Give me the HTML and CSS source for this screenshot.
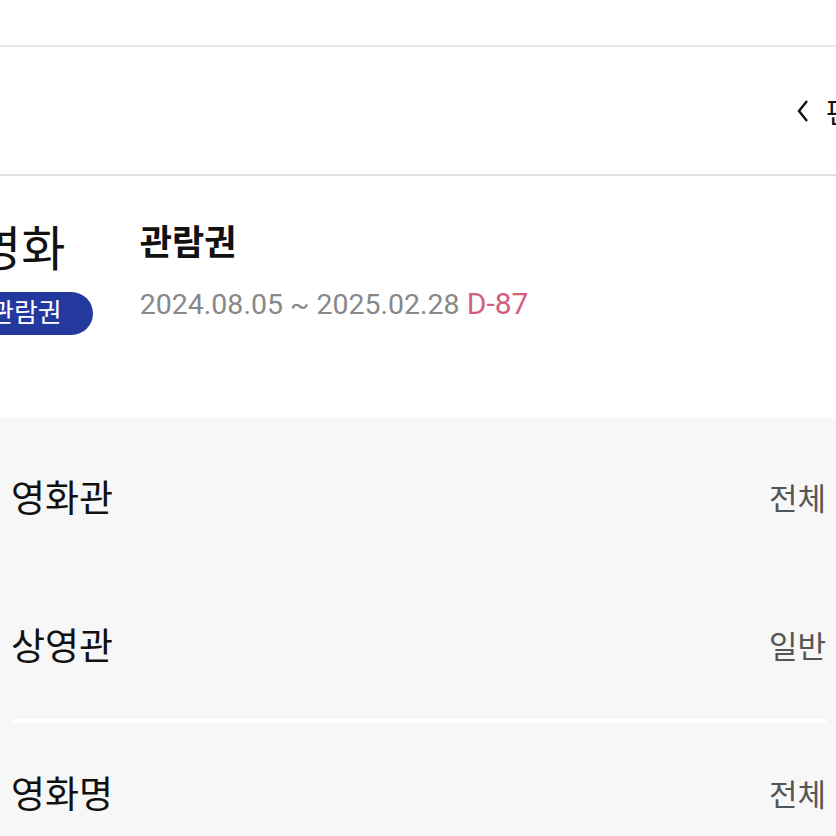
FILE: index.html
```html
<!DOCTYPE html>
<html lang="ko">
<head>
    <meta charset="UTF-8">
    <meta name="viewport" content="width=device-width, initial-scale=1.0">
    <title>관람권</title>
    <link rel="stylesheet" href="styles.css">
</head>
<body>

    <div class="status-bar"></div>

    <header class="header">
        <svg class="chevron" width="14" height="24" viewBox="0 0 14 24">
            <polyline points="11,2 3,12 11,22" fill="none" stroke="#111" stroke-width="2.4"/>
        </svg>
        <span class="header-title">편집</span>
    </header>

    <section class="ticket">
        <div class="brand">
            <div class="brand-name">영화</div>
            <span class="badge">관람권</span>
        </div>
        <div class="info">
            <h1 class="title">관람권</h1>
            <p class="period">2024.08.05 ~ 2025.02.28 <span class="dday">D-87</span></p>
        </div>
    </section>

    <section class="filters">
        <div class="row">
            <span class="label">영화관</span>
            <span class="value">전체</span>
        </div>
        <div class="row row-faint">
            <span class="label">상영관</span>
            <span class="value">일반</span>
        </div>
        <div class="row row-split">
            <span class="label">영화명</span>
            <span class="value">전체</span>
        </div>
    </section>

</body>
</html>
```

FILE: styles.css
```css
body {
    font-family: Roboto, "Noto Sans CJK KR", sans-serif;
    background-color: #fff;
    margin: 0;
    padding: 0;
    width: 836px;
    height: 836px;
    overflow: hidden;
}

.status-bar {
    height: 45px;
    background-color: #fff;
}

.header {
    height: 127px;
    border-top: 2px solid #e6e6e6;
    border-bottom: 2px solid #e0e0e0;
    display: flex;
    align-items: center;
    padding-left: 796px;
    white-space: nowrap;
    overflow: hidden;
}

.chevron {
    flex: 0 0 auto;
}

.header-title {
    margin-left: 16px;
    font-size: 28px;
    color: #111;
}

.ticket {
    height: 242px;
    box-sizing: border-box;
    padding-top: 48px;
    display: flex;
    align-items: flex-start;
    gap: 47px;
}

.brand {
    margin-left: -23px;
    display: flex;
    flex-direction: column;
    align-items: flex-start;
}

.brand-name {
    font-size: 48px;
    line-height: 52px;
    color: #111;
}

.badge {
    margin-top: 16px;
    height: 43px;
    line-height: 43px;
    padding: 0 31px 0 13px;
    border-radius: 22px;
    background-color: #24399e;
    color: #fff;
    font-size: 26px;
}

.title {
    margin: 0;
    font-size: 35px;
    line-height: 40px;
    font-weight: bold;
    color: #111;
}

.period {
    margin: 20px 0 0;
    font-size: 28.5px;
    line-height: 40px;
    color: #888;
}

.dday {
    color: #d2607c;
    font-size: 30px;
}

.filters {
    background-color: #f7f7f7;
    padding: 0 15px;
}

.row {
    height: 150px;
    display: flex;
    justify-content: space-between;
    align-items: center;
    margin-right: -5px;
    margin-left: -4px;
}

.row:first-child {
    padding-top: 6px;
    height: 144px;
}

.row-faint {
    border-top: 1px solid #fbfbfb;
}

.row-split {
    border-top: 4px solid #fff;
    height: 138px;
}

.label {
    font-size: 37px;
    color: #111;
}

.value {
    font-size: 31px;
    color: #555;
}
```
